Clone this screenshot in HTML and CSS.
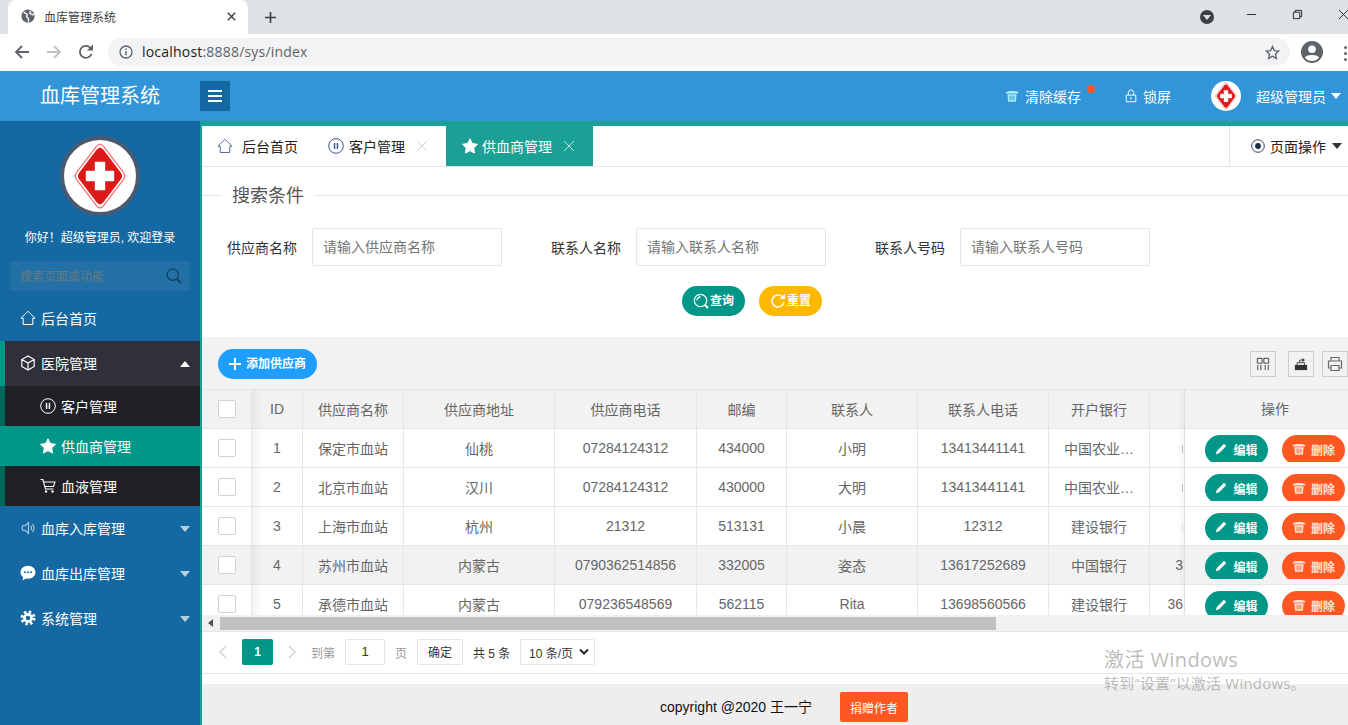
FILE: index.html
```html
<!DOCTYPE html>
<html lang="zh-CN">
<head>
<meta charset="utf-8">
<title>血库管理系统</title>
<link rel="stylesheet" href="styles.css">
</head>
<body>
<svg class="defs" width="0" height="0" aria-hidden="true">
  <symbol id="logo" viewBox="-40 -40 80 80">
    <path d="M-4-33Q0-38 4-33L26-4Q29 0 26 4L4 33Q0 38-4 33L-26 4Q-29 0-26-4Z" fill="#fff" stroke="#ee7a7a" stroke-width="1.500"/>
    <path d="M-4-29Q0-34 4-29L23-4Q26 0 23 4L4 29Q0 34-4 29L-23 4Q-26 0-23-4Z" fill="#dd1a1a"/>
    <path d="M-5-15H5V-5H15V5H5V15H-5V5H-15V-5H-5Z" fill="#fff" stroke="#fff" stroke-width="1.500" stroke-linejoin="round"/>
  </symbol>
  <symbol id="i-home" viewBox="0 0 16 16"><path d="M1 8.200 8 1.200l7 7h-2.200v6.300H3.200V8.200Z" fill="none" stroke="currentColor" stroke-width="1"/></symbol>
  <symbol id="i-pause" viewBox="0 0 16 16"><circle cx="8" cy="8" r="7.300" fill="none" stroke="currentColor" stroke-width="1"/><path d="M5.800 5h1.500v6H5.800zM8.700 5h1.500v6H8.700z" fill="currentColor"/></symbol>
  <symbol id="i-star" viewBox="0 0 16 16"><path d="M8 .8l2.300 4.800 5.200.7-3.800 3.600.9 5.200L8 12.600l-4.600 2.500.9-5.200L.5 6.300l5.200-.7z" fill="currentColor" stroke="currentColor" stroke-linejoin="round"/></symbol>
  <symbol id="i-cube" viewBox="0 0 16 16"><path d="M8 1l6.200 3.500v7L8 15l-6.200-3.500v-7zM1.800 4.500 8 8l6.200-3.500M8 8v7" fill="none" stroke="currentColor" stroke-width="1.200"/></symbol>
  <symbol id="i-cart" viewBox="0 0 16 16"><path d="M.5 1.500h2.300l2.700 9.500h8M4 4h11l-1.500 4.500H5.200" fill="none" stroke="currentColor" stroke-width="1.100"/><circle cx="6" cy="13.500" r="1.200" fill="currentColor"/><circle cx="12.500" cy="13.500" r="1.200" fill="currentColor"/></symbol>
  <symbol id="i-sound" viewBox="0 0 16 16"><path d="M1.500 5.500h3L8.500 2v12l-4-3.500h-3zM11 5.500a4 4 0 0 1 0 5M13 3.500a7 7 0 0 1 0 9" fill="none" stroke="currentColor" stroke-width="1.200"/></symbol>
  <symbol id="i-chat" viewBox="0 0 16 16"><path d="M8 .8c4.200 0 7.500 2.900 7.500 6.500s-3.300 6.500-7.500 6.500c-.8 0-1.500-.1-2.200-.3L2.500 15.500l.6-3.200C1.500 11.100.5 9.300.5 7.300.5 3.700 3.800.8 8 .8z" fill="currentColor"/><g fill="#14699f"><circle cx="4.800" cy="7.300" r="1"/><circle cx="8" cy="7.300" r="1"/><circle cx="11.200" cy="7.300" r="1"/></g></symbol>
  <symbol id="i-gear" viewBox="0 0 16 16"><circle cx="8" cy="8" r="6" fill="none" stroke="currentColor" stroke-width="3" stroke-dasharray="2.400 2.312"/><circle cx="8" cy="8" r="3.600" fill="none" stroke="currentColor" stroke-width="2.600"/></symbol>
  <symbol id="i-trash" viewBox="0 0 16 16"><path d="M1 3.500C3 1.800 13 1.800 15 3.500V5H1zM2.800 6h10.400l-.7 8.500H3.500z" fill="currentColor"/><path d="M5.800 7.500v5.500M8 7.500v5.500M10.200 7.500v5.500" stroke="var(--cut,#3295d8)" stroke-width="1"/></symbol>
  <symbol id="i-lock" viewBox="0 0 16 16"><path d="M2.500 7h11v7.500h-11zM5 7V4a3 3 0 0 1 6 0v3" fill="none" stroke="currentColor" stroke-width="1.100"/><rect x="7.300" y="9.500" width="1.400" height="2.400" fill="currentColor"/></symbol>
  <symbol id="i-pen" viewBox="0 0 16 16"><path d="M12 1l3 3L5.500 13.500 1 15l1.500-4.500z" fill="currentColor"/></symbol>
  <symbol id="i-search" viewBox="0 0 16 16"><circle cx="6.800" cy="6.800" r="5.600" fill="none" stroke="currentColor" stroke-width="1.200"/><path d="M11 11l4 4" stroke="currentColor" stroke-width="2"/></symbol>
  <symbol id="i-query" viewBox="0 0 16 16"><circle cx="7.500" cy="7.500" r="6.200" fill="none" stroke="currentColor" stroke-width="1.300"/><path d="M4 7.500a3.500 3.500 0 0 1 3.500-3.500" fill="none" stroke="currentColor" stroke-width="1.300"/><path d="M12 12l3 3" stroke="currentColor" stroke-width="2.200"/></symbol>
  <symbol id="i-refresh" viewBox="0 0 16 16"><path d="M13.800 9.500A6 6 0 1 1 12 3.500" fill="none" stroke="currentColor" stroke-width="1.500"/><path d="M9.500 6H15V.8z" fill="currentColor"/></symbol>
  <symbol id="i-plus" viewBox="0 0 12 12"><path d="M6 0v12M0 6h12" stroke="currentColor" stroke-width="2"/></symbol>
  <symbol id="i-close" viewBox="0 0 12 12"><path d="M1 1l10 10M11 1 1 11" stroke="currentColor" stroke-width="1" fill="none"/></symbol>
  <symbol id="i-target" viewBox="0 0 16 16"><circle cx="8" cy="8" r="7.200" fill="none" stroke="currentColor" stroke-width="1"/><circle cx="8" cy="8" r="3.300" fill="currentColor"/></symbol>
  <symbol id="i-cols" viewBox="0 0 16 16"><path d="M1.500 1.500h5.500v5.500H1.500zM9 1.500h5.500v5.500H9zM2 9v6M5.500 9v6M10.500 9v6M14 9v6" fill="none" stroke="currentColor" stroke-width="1"/></symbol>
  <symbol id="i-export" viewBox="0 0 16 16"><path d="M1 9h14v6H1z" fill="currentColor"/><path d="M3.500 9V6.500H12V9" fill="none" stroke="currentColor"/><path d="M9.500 1l3 2.500-3 2.500z" fill="currentColor"/><path d="M10 3.500H6.500v3" stroke="currentColor" fill="none"/></symbol>
  <symbol id="i-print" viewBox="0 0 16 16"><path d="M4 5V1.500h8V5M4 12H1.500V5h13v7H12M4 9.500h8v5H4z" fill="none" stroke="currentColor" stroke-width="1.200"/></symbol>
</svg>

<div class="browser">
  <div class="tabstrip">
    <div class="btab">
      <svg class="globe" viewBox="0 0 16 16"><circle cx="8" cy="8" r="7.500" fill="#5f6368"/><path d="M3 3.500 7 6l-.5 3 2 2v3.500M11 2l-1 3 3.500 1.500 1.300-.5" fill="none" stroke="#fff" stroke-width="1.600"/></svg>
      <span class="btab-title">血库管理系统</span>
      <svg class="btab-x" viewBox="0 0 12 12"><path d="M2 2l8 8M10 2l-8 8" stroke="#3c4043" stroke-width="1.600"/></svg>
    </div>
    <svg class="newtab" viewBox="0 0 14 14"><path d="M7 1v12M1 7h12" stroke="#3c4043" stroke-width="1.800"/></svg>
    <div class="spacer"></div>
    <span class="profile-dot"><i></i></span>
    <div class="winctl">
      <svg viewBox="0 0 12 12"><path d="M1 6h10" stroke="#222" stroke-width="1"/></svg>
      <svg viewBox="0 0 12 12"><path d="M1.500 3.500h7v7h-7zM3.500 3.500V1.500h7v7h-2" fill="none" stroke="#222" stroke-width="1"/></svg>
      <svg viewBox="0 0 12 12"><path d="M1 1l10 10M11 1 1 11" stroke="#222" stroke-width="1"/></svg>
    </div>
  </div>
  <div class="toolbar">
    <svg class="nav" viewBox="0 0 16 16"><path d="M15 8H2M8 2 2 8l6 6" fill="none" stroke="#5f6368" stroke-width="1.800"/></svg>
    <svg class="nav" viewBox="0 0 16 16"><path d="M1 8h13M8 2l6 6-6 6" fill="none" stroke="#bdc1c6" stroke-width="1.800"/></svg>
    <svg class="nav" viewBox="0 0 16 16"><path d="M13.500 10A6 6 0 1 1 12.500 4" fill="none" stroke="#5f6368" stroke-width="1.800"/><path d="M9 6.500h6V.5z" fill="#5f6368"/></svg>
    <div class="omnibox">
      <svg class="info" viewBox="0 0 14 14"><circle cx="7" cy="7" r="6" fill="none" stroke="#5f6368" stroke-width="1.300"/><path d="M7 6v4.200M7 3.500v1.500" stroke="#5f6368" stroke-width="1.400"/></svg>
      <span class="url"><b>localhost</b>:8888/sys/index</span>
      <svg class="bstar" viewBox="0 0 16 16"><path d="M8 1.500l2 4.400 4.700.5-3.500 3.200 1 4.700L8 11.900l-4.200 2.400 1-4.700L1.300 6.400 6 5.900z" fill="none" stroke="#5f6368" stroke-width="1.400"/></svg>
    </div>
    <svg class="account" viewBox="0 0 22 22"><circle cx="11" cy="11" r="11" fill="#5f6368"/><circle cx="11" cy="8.200" r="3.800" fill="#fff"/><path d="M3.800 16.500c2-3.300 12.400-3.300 14.400 0C16.500 19 13.800 20 11 20s-5.500-1-7.200-3.500z" fill="#fff"/></svg>
    <span class="dots"><i></i><i></i><i></i></span>
  </div>
</div>

<header class="topbar">
  <div class="brand">血库管理系统</div>
  <button class="hamburger" type="button"><i></i><i></i><i></i></button>
  <div class="spacer"></div>
  <div class="top-item cache"><svg class="ic14 cyan"><use href="#i-trash"/></svg><span>清除缓存</span><em class="dot"></em></div>
  <div class="top-item lock"><svg class="ic14"><use href="#i-lock"/></svg><span>锁屏</span></div>
  <div class="top-user"><span class="mini-logo"><svg><use href="#logo"/></svg></span><span>超级管理员</span><i class="caret white"></i></div>
</header>

<div class="main">
  <aside class="sidebar">
    <div class="avatar"><svg><use href="#logo"/></svg></div>
    <div class="hello">你好！超级管理员, 欢迎登录</div>
    <div class="side-search"><span>搜索页面或功能</span><svg class="ic16"><use href="#i-search"/></svg></div>
    <nav class="menu">
      <a class="mi"><svg class="ic16"><use href="#i-home"/></svg>后台首页</a>
      <a class="mi open"><svg class="ic16"><use href="#i-cube"/></svg>医院管理<i class="caret up"></i></a>
      <a class="si"><svg class="ic16"><use href="#i-pause"/></svg>客户管理</a>
      <a class="si on"><svg class="ic16"><use href="#i-star"/></svg>供血商管理</a>
      <a class="si"><svg class="ic16"><use href="#i-cart"/></svg>血液管理</a>
      <a class="mi"><svg class="ic14 soft"><use href="#i-sound"/></svg>血库入库管理<i class="caret dim"></i></a>
      <a class="mi"><svg class="ic16"><use href="#i-chat"/></svg>血库出库管理<i class="caret dim"></i></a>
      <a class="mi"><svg class="ic16"><use href="#i-gear"/></svg>系统管理<i class="caret dim"></i></a>
    </nav>
  </aside>

  <section class="content">
    <div class="tabs">
      <div class="tab first"><svg class="ic16 home-c"><use href="#i-home"/></svg><span>后台首页</span></div>
      <div class="tab second"><svg class="ic16 pause-c"><use href="#i-pause"/></svg><span>客户管理</span><svg class="tx"><use href="#i-close"/></svg></div>
      <div class="tab active"><svg class="ic16"><use href="#i-star"/></svg><span>供血商管理</span><svg class="tx"><use href="#i-close"/></svg></div>
      <div class="spacer"></div>
      <div class="page-ops"><svg class="ic14 target"><use href="#i-target"/></svg><span>页面操作</span><i class="caret dark"></i></div>
    </div>

    <div class="search-panel">
      <div class="legend"><span>搜索条件</span></div>
      <form class="form-row">
        <label>供应商名称</label><input placeholder="请输入供应商名称">
        <label class="gap">联系人名称</label><input placeholder="请输入联系人名称">
        <label class="gap">联系人号码</label><input placeholder="请输入联系人号码">
      </form>
      <div class="form-btns">
        <button class="pill teal" type="button"><svg class="ic16"><use href="#i-query"/></svg>查询</button>
        <button class="pill amber" type="button"><svg class="ic16"><use href="#i-refresh"/></svg>重置</button>
      </div>
    </div>

    <div class="grid-panel">
      <div class="grid-tools">
        <button class="pill blue" type="button"><svg class="ic12"><use href="#i-plus"/></svg>添加供应商</button>
        <div class="spacer"></div>
        <span class="tool"><svg class="ic14"><use href="#i-cols"/></svg></span>
        <span class="tool t2"><svg class="ic14"><use href="#i-export"/></svg></span>
        <span class="tool t3"><svg class="ic16"><use href="#i-print"/></svg></span>
      </div>
      <div class="table-wrap">
        <table class="data">
          <colgroup>
            <col class="c50"><col class="c51"><col class="c101"><col class="c151"><col class="c142"><col class="c90"><col class="c131"><col class="c131"><col class="c101"><col class="c35">
          </colgroup>
          <thead><tr><th><span class="cb"></span></th><th>ID</th><th>供应商名称</th><th>供应商地址</th><th>供应商电话</th><th>邮编</th><th>联系人</th><th>联系人电话</th><th>开户银行</th><th></th></tr></thead>
          <tbody>
            <tr><td><span class="cb"></span></td><td>1</td><td>保定市血站</td><td>仙桃</td><td>07284124312</td><td>434000</td><td>小明</td><td>13413441141</td><td>中国农业银行</td><td class="cut"><i class="sliver"></i></td></tr>
            <tr><td><span class="cb"></span></td><td>2</td><td>北京市血站</td><td>汉川</td><td>07284124312</td><td>430000</td><td>大明</td><td>13413441141</td><td>中国农业银行</td><td class="cut"><i class="sliver"></i></td></tr>
            <tr><td><span class="cb"></span></td><td>3</td><td>上海市血站</td><td>杭州</td><td>21312</td><td>513131</td><td>小晨</td><td>12312</td><td>建设银行</td><td class="cut"><i class="sliver faint"></i></td></tr>
            <tr class="hover"><td><span class="cb"></span></td><td>4</td><td>苏州市血站</td><td>内蒙古</td><td>0790362514856</td><td>332005</td><td>姿态</td><td>13617252689</td><td>中国银行</td><td class="cut">3</td></tr>
            <tr><td><span class="cb"></span></td><td>5</td><td>承德市血站</td><td>内蒙古</td><td>079236548569</td><td>562115</td><td>Rita</td><td>13698560566</td><td>建设银行</td><td class="cut">36</td></tr>
          </tbody>
        </table>
        <div class="left-shadow"></div>
        <div class="ops">
          <div class="ops-head">操作</div>
          <div class="ops-row"><button class="act edit" type="button"><svg class="ic12"><use href="#i-pen"/></svg>编辑</button><button class="act del" type="button"><svg class="ic14"><use href="#i-trash"/></svg>删除</button></div>
          <div class="ops-row"><button class="act edit" type="button"><svg class="ic12"><use href="#i-pen"/></svg>编辑</button><button class="act del" type="button"><svg class="ic14"><use href="#i-trash"/></svg>删除</button></div>
          <div class="ops-row"><button class="act edit" type="button"><svg class="ic12"><use href="#i-pen"/></svg>编辑</button><button class="act del" type="button"><svg class="ic14"><use href="#i-trash"/></svg>删除</button></div>
          <div class="ops-row hover"><button class="act edit" type="button"><svg class="ic12"><use href="#i-pen"/></svg>编辑</button><button class="act del" type="button"><svg class="ic14"><use href="#i-trash"/></svg>删除</button></div>
          <div class="ops-row"><button class="act edit" type="button"><svg class="ic12"><use href="#i-pen"/></svg>编辑</button><button class="act del" type="button"><svg class="ic14"><use href="#i-trash"/></svg>删除</button></div>
        </div>
      </div>
      <div class="hscroll"><i class="sb-arrow"></i><i class="sb-thumb"></i></div>
    </div>

    <div class="pager">
      <svg class="chev" viewBox="0 0 10 16"><path d="M8 2 2 8l6 6" fill="none" stroke="#d2d2d2" stroke-width="1.500"/></svg>
      <span class="pg-cur">1</span>
      <svg class="chev next" viewBox="0 0 10 16"><path d="M2 2l6 6-6 6" fill="none" stroke="#d2d2d2" stroke-width="1.500"/></svg>
      <span class="pg-muted goto">到第</span>
      <span class="pg-input">1</span>
      <span class="pg-muted pageword">页</span>
      <span class="pg-ok">确定</span>
      <span class="pg-total">共 5 条</span>
      <span class="pg-size">10 条/页<svg viewBox="0 0 10 8"><path d="M1 1.500 5 5.500l4-4" fill="none" stroke="#222" stroke-width="2"/></svg></span>
    </div>
    <div class="under-pager"></div>

    <footer class="footer">
      <span class="copy">copyright @2020 王一宁</span>
      <button class="donate" type="button">捐赠作者</button>
    </footer>
  </section>
</div>

<div class="watermark">
  <div class="wm1">激活 Windows</div>
  <div class="wm2">转到“设置”以激活 Windows。</div>
</div>
</body>
</html>
```
FILE: styles.css
```css
* { box-sizing: border-box; }
html, body { margin: 0; height: 100%; overflow: hidden; }
body {
  width: 1348px; height: 725px; display: flex; flex-direction: column;
  font-family: "Liberation Sans", "Noto Sans CJK SC", sans-serif; font-size: 14px; color: #333; background: #fff;
}
.defs { position: absolute; }
.spacer { flex: 1; }
button { font-family: inherit; border: 0; padding: 0; }
svg { display: block; flex: none; }
.ic12 { width: 12px; height: 12px; }
.ic14 { width: 14px; height: 14px; }
.ic16 { width: 16px; height: 16px; }

/* browser */
.browser { height: 71px; flex: none; }
.tabstrip { height: 34px; background: #dee1e6; display: flex; align-items: flex-start; }
.btab { margin-left: 8px; width: 240px; height: 34px; background: #fff; border-radius: 8px 8px 0 0; display: flex; align-items: center; padding-left: 13px; }
.globe { width: 14px; height: 14px; margin-top: -2px; }
.btab-title { margin-left: 9px; font-size: 12px; color: #3c4043; margin-top: -1px; }
.btab-x { width: 11px; height: 11px; margin-left: auto; margin-right: 11px; margin-top: -2px; }
.newtab { width: 13px; height: 13px; margin: 11px 0 0 16px; }
.profile-dot { width: 14px; height: 14px; border-radius: 50%; background: #3c4043; margin: 10px 0 0; display: flex; align-items: center; justify-content: center; }
.profile-dot i { border: 4px solid transparent; border-top: 5px solid #dee1e6; border-bottom: 0; }
.winctl { display: flex; margin: 9px -1px 0 32px; gap: 35px; }
.winctl svg { width: 11px; height: 11px; }
.toolbar { height: 37px; display: flex; align-items: flex-start; padding-top: 4px; background: #fff; }
.nav { width: 16px; height: 16px; margin: 6px 0 0 14px; }
.nav + .nav { margin-left: 16px; }
.toolbar .nav:first-child { margin-left: 14px; }
.omnibox { margin-left: 14px; width: 1182px; height: 28px; background: #f1f3f4; border-radius: 14px; display: flex; align-items: center; padding-left: 11px; }
.info { width: 14px; height: 14px; }
.url { margin-left: 9px; font-family: "Open Sans", sans-serif; font-size: 14px; color: #5f6368; letter-spacing: .2px; padding-bottom: 2px; }
.url b { font-weight: 400; color: #202124; }
.bstar { width: 15px; height: 15px; margin-left: auto; margin-right: 10px; }
.account { width: 22px; height: 22px; margin: 3px 0 0 11px; }
.dots { display: flex; flex-direction: column; gap: 3px; margin: 8px 0 0 21px; }
.dots i { width: 3px; height: 3px; border-radius: 50%; background: #5f6368; }

/* top bar */
.topbar { height: 50px; flex: none; background: #3295d8; color: #fff; display: flex; align-items: center; }
.brand { width: 200px; text-align: center; font-size: 20px; padding-bottom: 3px; }
.hamburger { width: 30px; height: 30px; background: #1469a3; display: flex; flex-direction: column; gap: 3px; align-items: center; justify-content: center; }
.hamburger i { width: 14px; height: 2px; background: #fff; }
.top-item { display: flex; align-items: center; font-size: 14px; position: relative; }
.top-item span { margin-left: 6px; padding-bottom: 1px; }
.cache { margin-right: 43px; }
.cyan { color: #a8eef5; --cut: #3295d8; }
.dot { position: absolute; right: -14px; top: -1px; width: 8px; height: 8px; border-radius: 50%; background: #ff5722; }
.lock { margin-right: 40px; }
.lock span { margin-left: 5px; }
.top-user { display: flex; align-items: center; font-size: 14px; margin-right: 7px; }
.top-user > span:not(.mini-logo) { padding-bottom: 1px; }
.mini-logo { width: 30px; height: 30px; border-radius: 50%; background: #fff; margin-right: 15px; display: block; }
.mini-logo svg { width: 30px; height: 30px; }
.caret { display: block; width: 0; height: 0; border: 5.500px solid transparent; border-bottom: 0; border-top: 6px solid; }
.caret.white { color: #fff; margin-left: 5px; }

/* sidebar */
.main { flex: 1; display: flex; min-height: 0; }
.sidebar { width: 200px; flex: none; background: #1469a3; color: #fff; display: flex; flex-direction: column; }
.avatar { width: 80px; height: 80px; border-radius: 50%; border: 4px solid #4a5a72; background: #fff; margin: 15px auto 0; }
.avatar svg { width: 72px; height: 72px; }
.hello { margin-top: 14px; text-align: center; font-size: 12px; line-height: 16px; }
.side-search { margin: 15px 10px 0; height: 30px; border-radius: 2px; background: #2270a6; display: flex; align-items: center; justify-content: space-between; padding: 0 8px 0 10px; font-size: 12px; color: #6b7a80; }
.side-search span { padding-bottom: 2px; }
.side-search svg { color: #0f3f60; }
.menu { margin-top: 5px; }
.mi, .si { display: flex; align-items: center; position: relative; color: #fff; }
.mi { height: 45px; padding: 0 0 2px 20px; font-size: 14px; }
.mi svg { margin-right: 5px; }
.mi .soft { margin: 0 6px 0 1px; color: #b3d3e6; }
.mi.open { background: #2f3039; border-left: 5px solid #009688; padding-left: 15px; }
.si { height: 40px; padding-left: 35px; background: #202127; border-left: 5px solid #006658; font-size: 14px; }
.si svg { margin-right: 5px; }
.si.on { background: #009688; border-left-color: #009688; }
.caret.up { position: absolute; right: 10px; top: 20px; border-top: 0; border-bottom: 6px solid #fff; }
.caret.dim { position: absolute; right: 10px; top: 20px; color: #b3cfe0; }

/* content */
.content { flex: 1; min-width: 0; display: flex; flex-direction: column; border-top: 5px solid #1aa094; border-left: 2px solid #1aa094; }
.tabs { height: 41px; flex: none; display: flex; border-bottom: 1px solid #e2e2e2; background: #fff; color: #222; font-size: 14px; }
.tab { display: flex; align-items: center; height: 40px; padding-bottom: 1px; }
.tab.first { width: 110px; padding-left: 15px; }
.tab.first span { margin-left: 9px; }
.tab.second { width: 134px; padding-left: 16px; }
.tab.second span { margin-left: 5px; }
.home-c { color: #5a6a94; }
.pause-c { color: #3b5a96; }
.tx { width: 12px; height: 12px; margin-left: 11px; color: #cfcfcf; }
.tab.active { width: 147px; padding-left: 16px; background: #1aa094; color: #fff; }
.tab.active span { margin-left: 4px; }
.tab.active .tx { color: #bfe3df; }
.page-ops { width: 119px; height: 40px; border-left: 1px solid #e2e2e2; display: flex; align-items: center; padding: 0 0 1px 21px; }
.page-ops span { margin-left: 5px; }
.target { color: #1a2c4c; }
.caret.dark { color: #333; margin-left: 6px; }

.search-panel { height: 170px; flex: none; background: #fff; }
.legend { margin-top: 18px; height: 20px; display: flex; align-items: center; font-size: 18px; color: #555; }
.legend::before { content: ""; width: 20px; height: 1px; background: #e6e6e6; }
.legend::after { content: ""; flex: 1; height: 1px; background: #e6e6e6; }
.legend span { padding: 0 10px 2px; }
.form-row { display: flex; align-items: center; padding-left: 25px; margin-top: 23px; }
.form-row label { width: 70px; margin-right: 15px; white-space: nowrap; color: #333; padding-bottom: 1px; }
.form-row label.gap { margin-left: 49px; }
.form-row input { width: 190px; height: 38px; border: 1px solid #e6e6e6; border-radius: 2px; padding: 0 10px 1px; font: inherit; outline: 0; }
.form-row input::placeholder { color: #757575; }
.form-btns { display: flex; justify-content: center; gap: 14px; margin-top: 20px; padding-right: 46px; }
.pill { height: 30px; border-radius: 15px; color: #fff; font-size: 12px; font-weight: 700; display: flex; align-items: center; justify-content: center; line-height: 16px; }
.pill.teal { width: 63px; background: #009688; gap: 1px; }
.pill.amber { width: 63px; background: #ffb800; gap: 1px; }
.pill.blue { width: 99px; background: #1e9fff; gap: 5px; padding-bottom: 1px; }
.pill.blue svg { margin-top: 1px; }

.grid-panel { height: 295px; flex: none; background: #f2f2f2; display: flex; flex-direction: column; border-bottom: 1px solid #e6e6e6; }
.grid-tools { height: 52px; flex: none; display: flex; align-items: flex-start; padding: 12px 0 0 16px; }
.tool { width: 26px; height: 26px; margin-top: 2px; border: 1px solid #ccc; display: flex; align-items: center; justify-content: center; color: #333; }
.tool.t2 { margin-left: 12px; }
.tool.t3 { margin-left: 8px; color: #666; }
.table-wrap { position: relative; height: 226px; flex: none; overflow: hidden; background: #fff; }
.data { table-layout: fixed; border-collapse: separate; border-spacing: 0; width: 983px; color: #666; }
.c50 { width: 50px; } .c51 { width: 51px; } .c101 { width: 101px; } .c151 { width: 151px; }
.c142 { width: 142px; } .c90 { width: 90px; } .c131 { width: 131px; } .c35 { width: 35px; }
.data th, .data td { padding: 0 15px 1px; text-align: center; font-weight: 400; white-space: nowrap; overflow: hidden; text-overflow: ellipsis; border-right: 1px solid #e6e6e6; border-bottom: 1px solid #e6e6e6; }
.data th { height: 40px; background: #f2f2f2; border-top: 1px solid #e6e6e6; }
.data td { height: 39px; background: #fff; }
.data th:first-child, .data td:first-child { padding: 0 0 0 16px; text-align: left; }
.data td.cut { padding: 0 1px 0 0; text-align: right; text-overflow: clip; }
.sliver { display: inline-block; width: 1px; height: 8px; background: #c4c4c4; }
.sliver.faint { background: #e2e2e2; }
.data .hover td { background: #f2f2f2; }
.cb { display: block; width: 18px; height: 18px; border: 1px solid #d2d2d2; border-radius: 2px; background: #fff; }
.left-shadow { position: absolute; left: 50px; top: 1px; bottom: 0; width: 10px; background: linear-gradient(to right, rgba(0,0,0,.05), rgba(0,0,0,0)); }
.ops { position: absolute; left: 983px; top: 0; width: 180px; height: 226px; background: #fff; box-shadow: -1px 0 8px rgba(0,0,0,.08); color: #666; }
.ops-head { height: 40px; line-height: 38px; text-align: center; background: #f2f2f2; border-top: 1px solid #e6e6e6; border-bottom: 1px solid #e6e6e6; }
.ops-row { height: 39px; padding: 6px 0 0 20px; display: flex; gap: 14px; overflow: hidden; border-bottom: 1px solid #e6e6e6; align-items: flex-start; }
.ops-row.hover { background: #f2f2f2; }
.act { width: 63px; height: 30px; flex: none; border-radius: 15px; color: #fff; font-size: 12px; font-weight: 700; display: flex; align-items: center; justify-content: center; gap: 6px; padding-bottom: 2px; clip-path: inset(0 0 3px 0); }
.act.edit { background: #009688; }
.act.del { background: #ff5722; --cut: #ff5722; color: #ffe3d9; gap: 5px; }
.hscroll { height: 16px; flex: none; background: #f1f1f1; display: flex; align-items: center; position: relative; }
.sb-arrow { margin-left: 6px; border: 4px solid transparent; border-left: 0; border-right: 5px solid #505050; }
.sb-thumb { margin-left: 7px; width: 776px; height: 13px; background: #c1c1c1; }

.pager { height: 42px; flex: none; display: flex; align-items: center; background: #fff; padding-bottom: 1px; border-bottom: 1px solid #e6e6e6; font-size: 12px; color: #333; }
.chev { width: 10px; height: 16px; margin-left: 16px; }
.pg-cur { width: 31px; height: 26px; margin-left: 14px; background: #009688; color: #fff; font-weight: 700; border-radius: 2px; text-align: center; line-height: 26px; font-size: 12px; }
.chev.next { margin-left: 14px; }
.pg-muted { color: #999; }
.goto { margin-left: 14px; }
.pg-input { width: 40px; height: 26px; margin-left: 10px; border: 1px solid #e6e6e6; border-radius: 2px; text-align: center; line-height: 24px; font-size: 13px; }
.pageword { margin-left: 10px; }
.pg-ok { width: 46px; height: 26px; margin-left: 10px; border: 1px solid #e6e6e6; border-radius: 2px; text-align: center; line-height: 27px; }
.pg-total { margin-left: 10px; color: #333; width: 37px; white-space: nowrap; }
.pg-size { width: 75px; height: 26px; margin-left: 10px; border: 1px solid #e6e6e6; border-radius: 2px; display: flex; align-items: center; padding-left: 8px; white-space: nowrap; }
.pg-size svg { width: 10px; height: 8px; margin-left: auto; margin-right: 5px; }
.under-pager { height: 10px; flex: none; background: #fff; }
.footer { flex: 1; background: #eee; display: flex; align-items: center; justify-content: center; padding: 5px 0 0 18px; color: #111; font-size: 14px; gap: 28px; }
.copy { margin-top: -3px; }
.donate { width: 68px; height: 30px; background: #ff5722; color: #fff; border-radius: 2px; font-size: 12px; font-weight: 400; }

.watermark { position: absolute; left: 1104px; top: 647px; color: rgba(120,120,120,.5); pointer-events: none; font-family: "Open Sans", "Noto Sans CJK SC", sans-serif; }
.wm1 { font-size: 20px; line-height: 26px; letter-spacing: .4px; }
.wm2 { font-size: 15px; line-height: 21px; white-space: nowrap; letter-spacing: .2px; }
```
